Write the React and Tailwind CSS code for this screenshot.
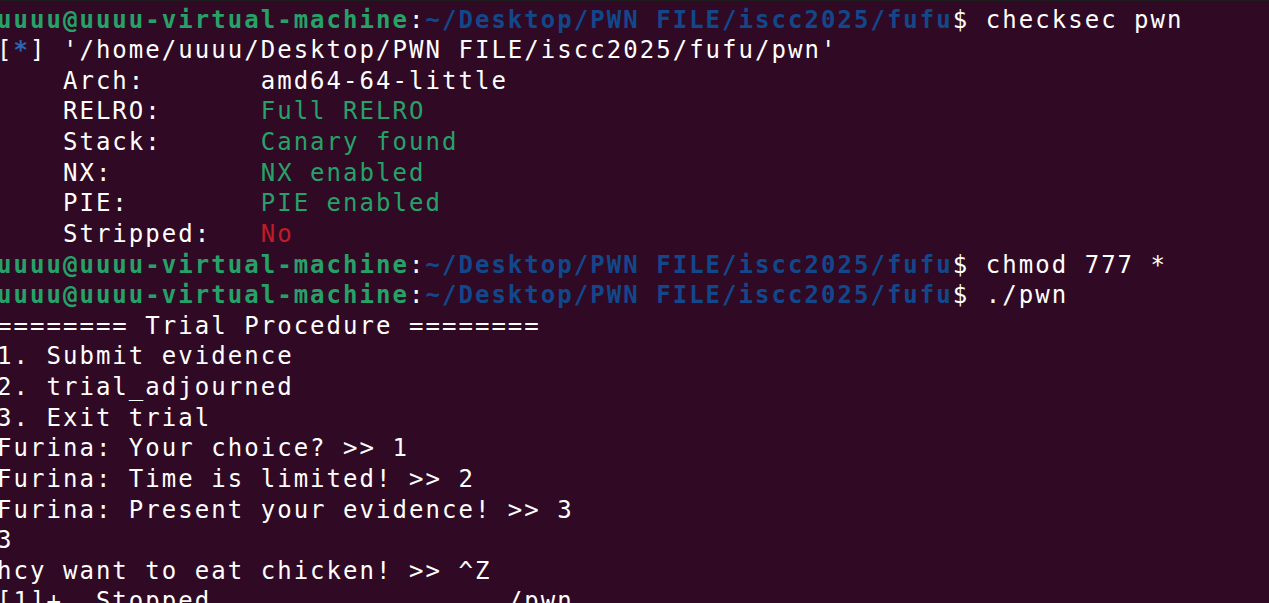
import React from 'react'

const G = 'text-[#26a269]'
const B = 'text-[#12488b]'
const W = 'text-[#ffffff]'

const Prompt = ({cmd}) => (
  <div className="whitespace-pre">
    <span className={`${G} font-bold`}>uuuu@uuuu-virtual-machine</span>
    <span className={W}>:</span>
    <span className={`${B} font-bold`}>~/Desktop/PWN FILE/iscc2025/fufu</span>
    <span className={W}>$ {cmd}</span>
  </div>
)

const Row = ({label, value, color}) => (
  <div className="whitespace-pre">
    <span className={W}>{'    ' + label.padEnd(12, ' ')}</span>
    <span className={color}>{value}</span>
  </div>
)

const Line = ({children}) => (
  <div className={`whitespace-pre ${W}`}>{children}</div>
)

const App = () => {
  return (
    <div className="w-[1269px] h-[603px] overflow-hidden bg-[#300a24] border-t border-[#1c1c1c]">
      <div className="ml-[-3px] pt-[3.5px] text-[24px] leading-[30.62px] tracking-[2.03px]" style={{fontFamily: '"DejaVu Sans Mono", monospace'}}>
        <Prompt cmd="checksec pwn" />
        <div className="whitespace-pre">
          <span className={W}>[</span>
          <span className="text-[#2a64b4] font-bold">*</span>
          <span className={W}>] '/home/uuuu/Desktop/PWN FILE/iscc2025/fufu/pwn'</span>
        </div>
        <Row label="Arch:" value="amd64-64-little" color={W} />
        <Row label="RELRO:" value="Full RELRO" color={G} />
        <Row label="Stack:" value="Canary found" color={G} />
        <Row label="NX:" value="NX enabled" color={G} />
        <Row label="PIE:" value="PIE enabled" color={G} />
        <Row label="Stripped:" value="No" color="text-[#c01c28]" />
        <Prompt cmd="chmod 777 *" />
        <Prompt cmd="./pwn" />
        <Line>======== Trial Procedure ========</Line>
        <Line>1. Submit evidence</Line>
        <Line>2. trial_adjourned</Line>
        <Line>3. Exit trial</Line>
        <Line>Furina: Your choice? &gt;&gt; 1</Line>
        <Line>Furina: Time is limited! &gt;&gt; 2</Line>
        <Line>Furina: Present your evidence! &gt;&gt; 3</Line>
        <Line>3</Line>
        <Line>hcy want to eat chicken! &gt;&gt; ^Z</Line>
        <Line>{'[1]+  Stopped                 ./pwn'}</Line>
      </div>
    </div>
  )
}

export default App
